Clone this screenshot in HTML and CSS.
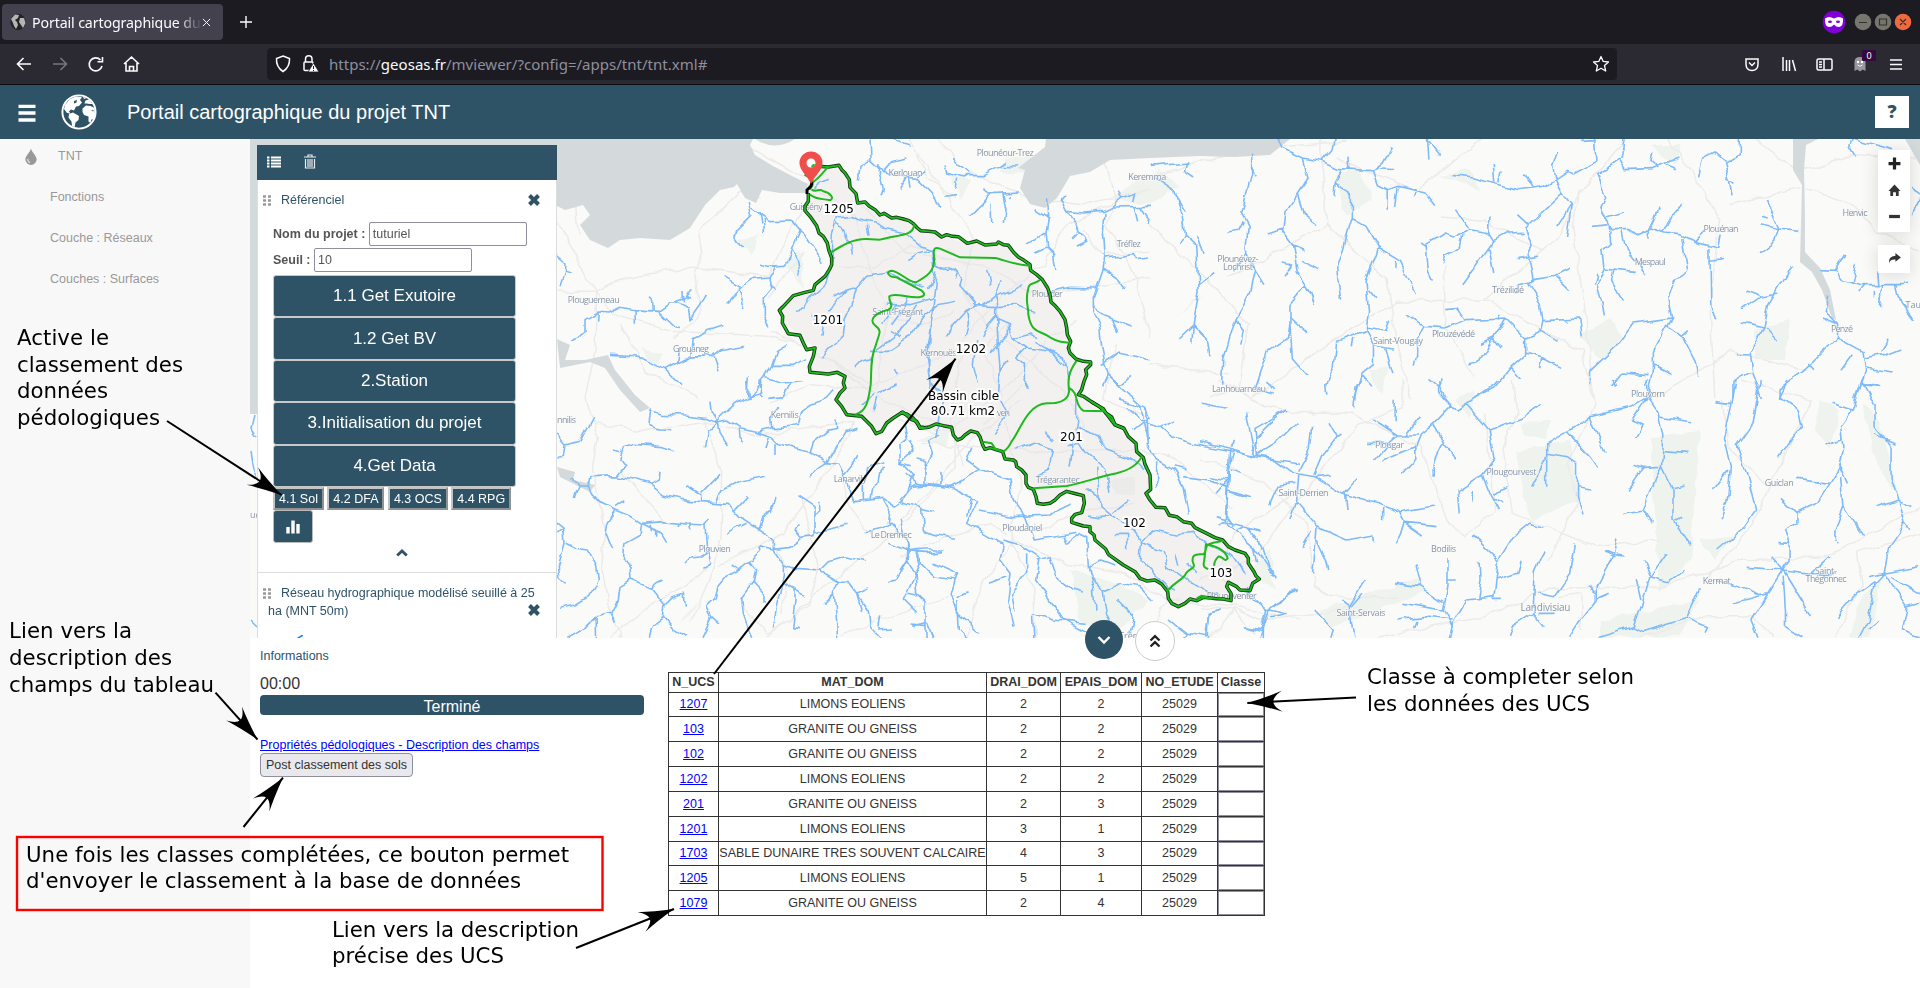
FILE: index.html
```html
<!DOCTYPE html>
<html lang="fr">
<head>
<meta charset="utf-8">
<title>Portail cartographique du projet TNT</title>
<link rel="stylesheet" href="styles.css">
</head>
<body>
<div class="screen">
  <div class="tabs">
    <div class="tab">
      <svg class="favicon" viewBox="0 0 16 18"><ellipse cx="8" cy="9" rx="7.6" ry="8.2" fill="#242424"/><path d="M1 6 5 1.500 9 2 8 5 5 7 7 9 8 12 6 16 4 13 3 10ZM10 5 14 5 15.500 10 13 15 11 12 9 9Z" fill="#b5b5b5"/></svg>
      <span class="tab-title">Portail cartographique du</span>
      <svg class="tab-close" viewBox="0 0 10 10"><path d="M1 1 9 9M9 1 1 9" stroke="#fbfbfe" stroke-width="1.100"/></svg>
    </div>
    <svg class="newtab" viewBox="0 0 12 12"><path d="M6 0V12M0 6H12" stroke="#fbfbfe" stroke-width="1.400"/></svg>
    <svg class="winctl" viewBox="0 0 92 26">
      <circle cx="12" cy="13" r="11.300" fill="#8000d7"/>
      <path d="M3 9.500Q7 6.500 12 9.500 17 6.500 21 9.500 21.500 17.500 17 18 14 18 12 15.500 10 18 7 18 2.500 17.500 3 9.500Z" fill="#fff"/><ellipse cx="8" cy="12.800" rx="2" ry="1.300" fill="#8000d7"/><ellipse cx="16" cy="12.800" rx="2" ry="1.300" fill="#8000d7"/>
      <circle cx="41" cy="13" r="8.300" fill="#77766e"/><circle cx="61" cy="13" r="8.300" fill="#77766e"/><circle cx="81" cy="13" r="8.300" fill="#ee6940"/>
      <path d="M37 13.500H45M57.500 10H64.500V16H57.500ZM78 10 84 16M84 10 78 16" stroke="#33322e" stroke-width="1.200" fill="none"/>
    </svg>
  </div>
  <div class="toolbar">
    <svg class="nav" viewBox="0 0 140 24" fill="none" stroke="#fbfbfe" stroke-width="1.600">
      <path d="M15 12H2M7.500 6 1.500 12 7.500 18"/><path d="M37 12H50M44.500 6 50.500 12 44.500 18" stroke="#77767f"/>
      <path d="M84.500 8A6.500 6.500 0 1 0 86 14M86.500 5V9.800H81.500"/>
      <path d="M108 12 115.500 5 123 12M110 11V19H121V11M113.500 19V14.500H117.500V19"/>
    </svg>
    <div class="urlbar">
      <svg class="shield" viewBox="0 0 44 20" fill="none" stroke="#fbfbfe" stroke-width="1.500"><path d="M8 2 14.500 4.500Q15 13 8 17.500 1 13 1.500 4.500Z"/><rect x="29" y="8" width="9" height="8.500" rx="1"/><path d="M30.500 8V5A3.200 3.200 0 0 1 37 5V8"/><path d="M38.500 9 44 18H33Z" fill="#fbfbfe" stroke="#1c1b22" stroke-width=".8"/><path d="M38.500 12V15M38.500 16V17" stroke="#1c1b22" stroke-width="1"/></svg>
      <span class="url">https://<b>geosas.fr</b>/mviewer/?config=/apps/tnt/tnt.xml#</span>
      <svg class="star" viewBox="0 0 18 18"><path d="M9 1.500 11.200 6.400 16.500 7 12.500 10.600 13.700 16 9 13.300 4.300 16 5.500 10.600 1.500 7 6.800 6.400Z" fill="none" stroke="#fbfbfe" stroke-width="1.300" stroke-linejoin="round"/></svg>
    </div>
    <svg class="tools" viewBox="0 0 170 32" fill="none" stroke="#fbfbfe" stroke-width="1.500">
      <path d="M6 11H18V16Q18 22.500 12 22.500 6 22.500 6 16ZM9 14.500 12 17.500 15 14.500"/>
      <path d="M43 9V23M46.500 12V23M49.500 12V23M52.500 12 55.500 23"/>
      <rect x="77" y="11" width="15" height="11" rx="1.500"/><path d="M84 11V22M79 14H82M79 16.500H82M79 19H82"/>
      <path d="M114.500 23V14Q114.500 9 120 9 125.500 9 125.500 14V23L122.700 21.500 120 23.500 117.300 21.500Z" fill="#98979d" stroke="none"/><circle cx="118" cy="14" r="1.200" fill="#fff" stroke="none"/><circle cx="122" cy="14" r="1.200" fill="#fff" stroke="none"/><path d="M117.500 17Q120 19.500 122.500 17" stroke="#eee" stroke-width="1"/>
      <rect x="122" y="2" width="14" height="11" rx="1" fill="#33093f" stroke="none"/><text x="126.500" y="11" class="badge">0</text>
      <path d="M150 12H162M150 16.500H162M150 21H162"/>
    </svg>
  </div>
  <header class="header">
    <svg class="burger" viewBox="0 0 18 18"><path d="M.5 2.300H17.500M.5 9H17.500M.5 16H17.500" stroke="#fff" stroke-width="3.300"/></svg>
    <svg class="globe" viewBox="0 0 36 36"><circle cx="18" cy="18" r="16.600" fill="#2e5367" stroke="#fff" stroke-width="1.900"/><path d="M4 11 9 5 15 2.500 21 3 19 6 21 8.500 18 12 15 12.500 13 16.500 10 15.500 8 17.500 9.500 19.500 6 19 3 15ZM8 20 12 18.500 18 22 17.500 26 14.500 28.500 13.500 33.500 11 32 10.500 27.500 7.500 23.500ZM21.500 14.500 25 11.500 29.500 12 33.500 14 34 20 33 25 30.500 25.500 29.500 29 27.500 27.500 27.500 22.500 23 21 21.500 18ZM23.500 9.500 24.500 6.500 28 5.500 31.500 10 28 10 26 9.500ZM22 3 25.500 4 23 5Z" fill="#fff"/><path d="M13 7 16 6 15.500 8.500 13 9.500ZM30 16 32 17.500 33 16.500" fill="#2e5367"/></svg>
    <h1>Portail cartographique du projet TNT</h1>
    <div class="help">?</div>
  </header>
  <div class="body">
    <aside class="side">
      <div class="side-top"><svg viewBox="0 0 12 18"><path d="M6 .5C7 5 12 8 12 12A6 6 0 0 1 0 12C0 8 5 5 6 .5Z" fill="#999"/><path d="M2.300 11.500Q2.500 14.500 5 15.500" stroke="#ddd" fill="none" stroke-width="1.400"/></svg>TNT</div>
      <div>Fonctions</div><div>Couche : Réseaux</div><div>Couches : Surfaces</div>
    </aside>
    <main class="main">
      <section class="map">
        <svg class="carto" viewBox="250 139 1670 499">
          <defs>
            <filter id="meander" filterUnits="userSpaceOnUse" x="250" y="139" width="1670" height="499" color-interpolation-filters="sRGB"><feTurbulence type="fractalNoise" baseFrequency=".07" numOctaves="1" seed="4"/><feDisplacementMap in="SourceGraphic" scale="9" xChannelSelector="R" yChannelSelector="G"/></filter>
          </defs>
          <rect x="250" y="139" width="1670" height="499" fill="#fafaf8"/>
          <g filter="url(#meander)">
          <g class="wood">
            <path d="M1130 185 1160 170 1180 185 1150 205 1110 200ZM1335 175 1360 170 1372 200 1345 215ZM1580 335 1610 320 1625 340 1600 360ZM1320 610 1420 578 1425 592 1330 628ZM1520 425 1550 420 1545 440 1525 435ZM1515 450 1570 440 1580 500 1530 520ZM1650 440 1700 430 1690 560 1660 590ZM1755 330 1790 320 1785 360 1755 360ZM1600 620 1700 600 1680 635 1600 638ZM1860 400 1880 470 1900 500 1880 420ZM1070 570 1110 580 1150 600 1110 638 1080 620ZM1110 480 1135 478 1135 495 1115 495ZM735 240 760 235 750 255ZM640 347 665 355 655 368ZM1005 158 1035 155 1030 175 1000 172ZM1270 550 1275 590 1250 570ZM1820 400 1840 410 1830 450 1815 430ZM1440 175 1470 170 1480 190ZM950 175 970 180 960 200Z"/>
            <path d="M1650 145 1680 145 1675 165ZM1370 370 1390 365 1380 395ZM1700 540 1735 535 1715 560ZM1860 600 1880 580 1870 638 1850 638ZM680 620 700 600 690 615ZM785 265 800 250 805 290ZM1175 318 1205 295 1195 300ZM1455 400 1475 390 1470 420ZM915 440 950 425 945 445Z"/>
          </g>
          <g class="road" transform="translate(555 138) scale(.33333)">
            <path d="M0 240 40 310 75 390 125 460 120 640 90 780M125 460Q220 400 430 390L640 415 680 330 770 170M125 460 175 530 350 580 640 595 760 630 940 735M0 460 125 460M560 0 640 60 760 130 900 230 940 380 1000 520 960 760M620 180 560 160 430 280 440 340 420 400 440 520 360 600M750 340 700 400 640 480M200 560 270 700 430 780M850 380 960 390 1060 320 1200 350M1060 0 1120 120 1200 180M0 100 60 180 70 290M180 0 300 40M640 800 760 740 940 750 1200 640M1000 540 1120 560 1200 520"/>
            <path d="M90 780 130 900 110 1000 150 1170 140 1290 160 1400 200 1500 190 1499M120 858 280 880 450 850 600 890 900 850M440 840 500 1000 495 1200 480 1280 410 1450M495 1280 680 1190 820 1000 900 850M680 1430 700 1300 640 1190M470 1275 400 1340 290 1400 160 1500M640 1500 800 1350 1000 1200 1200 990 1200 850M950 1190 880 1100 860 1000M560 1400 640 1490 760 1400 790 1300 740 1080M200 1000 330 1150M860 1490 1200 1370"/>
          </g>
          <g class="road" transform="translate(750 138) scale(.33333)">
            <path d="M560 0 640 90 840 180 1000 200 1200 150M500 40 560 130 670 300 640 460 720 570 940 760 1000 860 960 930M1200 150 1100 190 950 260 880 380 760 470 640 600 600 860 640 980M1050 30 1100 180 1070 260 1150 400 1200 600M320 180 460 340 700 380 850 470 1000 450 1200 420M620 860 760 760 900 600 980 550M600 870 400 790 230 660 60 580M1100 620 1060 780 1200 840M820 740 700 860M500 860 600 880"/>
            <path d="M1200 340 1060 350 1000 280M770 560 700 640 760 780"/>
          </g>
          <g class="road" transform="translate(900 400) scale(.33333)">
            <path d="M0 360 100 260 200 130 290 60 360 0M320 60 340 170 370 260 330 380 340 440 400 560 410 720M60 130 240 140 420 160 640 150 800 160 900 240 1000 330M0 60 120 100M340 420 500 490 680 520 800 600 1000 620 1200 660M1000 620 960 500 1000 400 1200 270M420 390 560 330 700 310M320 400 270 370 140 410 0 470M920 720 1000 630 1060 700M200 720 240 560 340 430M800 600 740 720"/>
          </g>
          <g class="road" transform="translate(1150 138) scale(.4911 .33333)">
            <path d="M0 120 100 70 240 30 400 10M0 260 100 400 200 560 180 750 120 780M350 0 350 80 360 260 480 420 500 600 530 780M160 420 360 260M210 780 360 620 500 490 680 485 830 300 870 180 970 0M680 485 880 640 900 780M880 150 860 260 890 560 900 700M590 240 680 250 800 340M1050 0 1100 100 1160 240 1140 500 1150 780M1180 200 1330 150 1430 200 1480 280 1568 340M1230 0 1320 100 1440 50 1568 60M600 380 600 560 660 720M380 60 540 160 680 0M0 680 160 710M1030 780 1180 640 1340 700"/>
          </g>
          <g class="road" transform="translate(1200 380) scale(.4592 .33333)">
            <path d="M0 240 60 260 160 330 230 430 250 620 290 650 430 655M240 100 330 100 480 200 540 430 580 470 640 390 620 100M0 680 80 690 130 720 280 700 370 640M680 0 690 100 660 200 680 400 860 500 1000 480M760 540 820 370 800 250 860 80 850 0M1180 0 1330 60 1200 440 1100 600M0 600 120 540 220 350 340 140 440 80 440 0M380 773 620 710 760 625 1000 620 1120 570 1180 540 1360 530 1450 470 1568 385M780 650 830 640 830 750M950 773 1100 710 1200 710 1250 773M1380 773 1440 620 1430 520 1568 460M1230 310 1150 200 1140 60M40 0 140 80 250 105"/>
          </g>
          </g>
          <g class="sea">
            <path d="M250 139H753L750 145 755 155 773 166 792 176 808 184 805 193 780 193 762 190 756 203 745 198 737 184 734 187 720 190 705 205 690 228 670 240 640 238 620 240 608 248 590 240 580 225 590 215 583 205 565 210 557 206V414H250ZM755 139H795Q775 152 755 139ZM1046 139H1290L1270 155 1235 157 1200 156 1150 158 1110 160 1090 172 1070 176 1057 198 1045 208 1030 204 1020 188 1025 170 1018 168 1045 147ZM1793 139H1818L1806 145 1804 170 1805 215 1805 252 1820 268 1830 290 1836 320 1832 318 1822 290 1812 272 1800 262 1802 185 1793 170ZM1905 139H1920V165ZM557 339 570 345 565 360 585 360 608 355 615 370 635 395 650 408 640 412 620 390 605 368 590 362 560 368ZM557 467 575 472 573 480 595 485 590 492 560 477Z"/>
          </g>
          <g class="basinfill">
            <path transform="translate(750 138) scale(.33333)" d="M170 100 205 85 267 83 300 125 323 195 390 230 490 257 512 277 652 316 775 322 840 380 895 452 947 550 962 610 978 663 1022 672 995 768 1012 786 450 824 390 882 355 855 290 830 258 785 285 715 180 703 195 630 150 592 97 555 88 517 130 473 190 457 245 380 240 345 165 218 175 165Z"/>
            <path transform="translate(900 400) scale(.33333)" d="M562 0 645 75 708 132 750 220 752 265 738 280 768 322 808 346 920 400 1035 460 1078 537 1050 572 985 547 993 602 910 590 835 620 812 608 785 550 740 543 625 463 570 380 515 367 545 338 553 290 500 274 450 310 412 310 400 268 378 230 308 155 255 145 235 98 172 120 155 85 60 85 0 38Z"/>
          </g>
          <g filter="url(#meander)">
          <g class="river" transform="translate(555 138) scale(.33333)">
            <path d="M0 350 30 375 28 400 52 405M30 400 15 448M50 608 75 600 90 585 90 545 130 522 165 525 200 508 235 515 310 520 345 495 370 493 400 510 405 540 430 505 452 470M130 522 128 545M237 515 238 560M292 520 290 490 282 482M310 520 360 567 372 568M360 493 410 475M388 493 387 460M395 480 415 448M165 652 220 655 270 662 330 695 378 740M330 695 365 675 410 653 470 655 495 635 572 622M365 675 370 640M410 653 415 605 455 585 460 575 505 560M478 655 492 697M580 195 590 235 545 280 540 300 560 330M590 210 640 245 710 243 735 275 770 320 798 360 797 378M625 240 628 288M612 220 618 260M735 270 710 330 700 370 690 382 640 385 615 378M710 330 725 370 732 410M665 385 645 420 590 425 560 450 525 430 503 418M645 420 650 450 625 480 625 540 642 568M560 450 515 497M550 455 570 508M645 440 665 455"/>
            <path d="M750 665 715 685 650 685 630 720 590 770 580 780M695 622 665 640 650 685M630 718 680 733 740 725M575 775 580 715M620 735 615 770 622 780M945 0 948 65 915 85 910 125M948 65 985 100 1000 85 1010 70 1060 60M975 75 973 110 985 150 978 172M985 100 1050 120 1090 125 1145 180 1158 212M1055 120 1035 155M1060 120 1065 152M1090 120 1110 100M1000 0 1062 18M1165 175 1200 170M820 520 840 490 870 460 905 450 935 415 1000 405 1040 430 1110 450M905 450 890 500 870 545 865 590 805 655M870 460 830 480M800 590 805 560 770 530M720 520 750 515 770 475 810 440 830 380 835 290 850 240 890 235 910 245 960 255 985 270 1050 285 1100 325 1130 335 1140 420 1120 450M845 250 865 280 870 300M940 260 945 290M870 300 890 320 895 350M1130 335 1140 380 1200 400M1130 335 1090 345 1060 365M780 160 790 130 815 118M1140 500 1125 600 1120 700 1130 780M1200 490 1150 500 1110 530 1060 600 1000 640 945 640M1060 480 1040 520 1010 560M1005 580 1035 600M900 690 920 670 950 660"/>
          </g>
          <g class="river" transform="translate(555 380) scale(.33333)">
            <path d="M0 160 30 195 25 232 5 235M30 195 75 183 90 155 113 112M290 85 285 140 310 150 350 152M285 90 320 103 390 105 450 113 490 125 520 120 555 143 610 155 650 170 670 190 710 205 765 217 815 245 850 250 868 285 890 340 900 365 985 355 1020 378 1045 360 1060 320 1110 315 1200 320M468 65 472 95 490 125 495 160 517 195M490 125 470 148 455 150 445 205M490 120 520 90 580 50 620 40 615 5M580 50 575 0M640 55 685 50 710 0M550 145 552 175 563 187M640 170 630 205M663 190 663 228M610 155 650 143 700 140 730 132 740 95 770 75 800 65 835 25M650 143 647 110 672 85M765 217 775 185 820 150 845 145 843 118M815 245 790 260 765 292M815 245 870 155 908 145M868 285 900 245 908 225M890 340 930 300 938 260 985 245M925 360 925 305M945 360 950 330 975 310 985 260"/>
            <path d="M50 300 70 318 60 340 55 357M70 318 100 318 105 290 185 287 240 297 285 313 325 345 375 358 440 365 520 370 555 410 610 447 655 475 655 510 685 555 685 590 665 680 655 745M100 318 110 340 140 370 180 390 230 410 260 430 320 460 335 485M185 287 210 255 195 235 205 200 240 190 320 197 360 210M195 215 180 210M285 313 310 300 312 275M440 365 440 345 395 318M440 340 495 283M485 365 500 330 555 300 610 290 628 285M540 395 577 355M575 430 545 445 517 463M610 447 620 415 650 393 663 357M180 390 155 430 150 460 170 510M180 380 205 362M260 430 320 425 390 432 450 435 460 420M260 430 255 465 210 490 205 535 225 560 228 600 195 620 190 660 170 700 125 710 90 745 40 775M285 435 290 455M305 450 305 470M370 430 365 440M400 430 405 450M450 435 455 520 440 530 410 535 390 555M455 510 465 555 442 568M228 600 290 625 330 675 325 715 290 740 280 770M290 625 300 610 320 600M330 675 350 655 385 643 388 680M325 715 350 745 390 770M170 700 185 727M120 715 122 780"/>
            <path d="M0 425 25 445 30 490 10 560 15 590 35 607M25 445 5 465M35 490 65 505 100 510 125 560 130 605 100 650 60 675 15 685M655 510 612 500M655 505 705 500 740 475 780 470 780 380 730 347M780 460 850 440 875 433M740 475 720 450 730 430M780 410 797 395 797 365M612 500 615 515 580 545 550 570 515 590 490 620 480 655 455 680 470 710 440 772M580 545 605 570 598 605 560 655 565 700 590 770M598 605 630 640 630 668M550 570 530 555M470 710 495 733M685 555 720 565 795 570 850 603 880 605 905 640 940 690 945 740 975 773M795 570 820 545 870 530 935 545M850 603 835 640 845 770M835 645 810 670M905 640 940 623M905 640 920 690M975 750 1005 747M975 745 980 712M685 610 720 630 720 660 710 740 735 743M720 630 750 645M985 360 1005 395 1000 425 1050 475 1060 515 1055 540 1080 580 1085 640 1110 665 1110 770M1005 430 980 445 935 455M1060 515 1000 490M1060 515 1110 510 1165 510M1055 540 1025 600 1000 605M1090 515 1100 550 1140 590 1200 600M1045 365 1100 385 1140 395M1100 385 1105 450 1140 465 1200 475M1060 320 1075 285 1035 240 1035 195 1055 180 1045 135M1035 250 1070 260M1110 315 1110 260 1135 225 1120 180 1155 165M1060 640 1085 645M1070 735 1110 740"/>
          </g>
          <g class="river" transform="translate(750 138) scale(.33333)">
            <path d="M585 85 590 105 640 120 650 110 700 110 745 85 805 87M620 125 615 150M660 105 610 60M745 85 765 70M660 235 700 195 720 170 810 165M720 170 700 155M720 200 722 258M755 165 765 215 760 252M780 175 775 180M890 180 893 240 885 285 890 330 910 350 918 395M885 285 825 320M890 330 855 345M893 240 855 215M930 180 950 220 1000 225 1060 220 1080 210 1200 208M945 170 930 190M950 220 975 255 985 280 1010 310 980 325M985 285 970 300M1065 225 1060 280 1065 350 1058 400 1030 480 1030 530 1050 570 1055 630 1065 680 1075 710 1105 740 1170 800 1195 900M1080 210 1115 180 1105 155M1115 180 1150 165 1145 190M1150 210 1160 250M1170 210 1200 255M1065 360 1150 350 1160 365 1200 360M1060 390 1105 420 1130 450M1040 450 960 448 900 460M1030 510 1060 530 1085 540 1100 585M1085 540 1150 565M1055 680 1105 645 1200 665M1075 710 1058 745M1075 710 1110 740 1140 715M850 610 940 660 955 720"/>
            <path d="M550 345 560 380 590 400 620 395 635 425 630 440 660 475 680 500 740 503 800 500 850 520M680 500 650 515 610 560 590 595M700 500 730 475 800 455 815 440M745 500 735 470 750 430M710 395 720 440M620 400 612 425M740 505 740 545 775 560 790 600 830 630 900 640 950 690M740 530 715 560 695 600M775 560 775 590 720 645M790 600 850 585 860 600M830 630 800 660 820 680 820 720 835 750M740 545 750 700 745 780 770 830 730 890M750 700 775 670M650 515 655 560 645 590M680 600 670 680 685 740M410 495 480 500 550 480 560 400M555 480 545 560 530 650 545 740 580 770 560 900M500 500 460 560 440 590 380 635M380 780 370 820M380 770 440 740M370 770 330 800M440 710 430 690M440 500 395 560"/>
          </g>
          <g class="river" transform="translate(900 400) scale(.33333)">
            <path d="M0 300 35 260 50 250 20 225M50 250 150 262 240 208 330 240 340 300 370 340 400 420 530 400M120 260 120 215M150 262 230 300 200 370 270 410 310 430 300 480 330 520 320 600 340 680M215 290 200 350M240 208 200 180 215 140M75 220 80 180 50 170M0 190 45 150 30 120M240 330 340 350 450 345 470 330 515 308M0 360 20 430 20 480 0 510M20 455 80 460 125 455M50 455 60 490 10 600 50 640M100 490 170 520 150 580 170 640 240 700M170 590 200 575M310 420 360 435 420 475 410 540 450 600 490 660 560 700M380 460 380 520 335 580 345 635M410 480 450 470 470 530 520 570 555 580M270 550 320 530M400 640 460 660 560 670M400 640 405 720M40 680 80 670 100 720M170 600 175 690 205 720M500 430 540 400 560 410 565 500 580 560 585 630M565 500 600 480 640 495M570 520 610 580 620 650 650 700M610 580 660 550 720 560 760 600M650 600 700 650 690 700M500 430 490 410"/>
            <path d="M530 0 530 60 510 200M530 80 590 110 620 150 700 180 730 210M500 140 540 130 560 160 620 210M350 150 400 130 460 150 450 210 415 225M460 120 435 95M590 200 600 320 635 350 690 380M635 345 600 350 565 345M635 340 685 300M650 400 680 400 680 450M690 380 725 425 760 390 830 405 880 400 920 430 1000 470 1035 520M725 425 720 480 800 560 830 570M725 430 790 455 800 500 870 550 950 585M830 460 840 500M860 490 890 520M600 300 560 270M620 210 630 280M660 0 740 25 750 50 700 90M740 25 745 130 770 180 820 210 850 260 860 320 865 340M770 190 770 260M820 200 860 210M680 20 720 60 780 80 820 115 880 130 950 145 1060 165 1140 180 1200 190M780 80 820 60M1000 150 985 210 980 350 1000 380M985 260 930 240 850 230M985 270 1050 290M990 210 1020 220M1060 165 1070 110 1110 70 1160 30M1060 150 1040 40M980 370 1060 440 1100 500 1135 525M1060 440 1070 490M980 360 950 350"/>
            <path d="M810 660 860 700 920 710 930 640 960 630M860 700 840 720M1035 680 1090 690 1110 620 1150 600 1190 565M1090 690 1090 720M1110 650 1160 640"/>
          </g>
          <g class="river" transform="translate(1150 138) scale(.4911 .33333)">
            <path d="M0 85 75 75 70 100 90 120M10 120 50 160 65 230 70 285 95 320 100 460 88 560 60 600M88 560 115 600 120 655M88 560 85 620M70 285 60 320M95 290 108 350M100 440 130 405M55 180 72 220M205 50 205 110 185 220 200 260 195 340 215 400 205 460 175 540 150 660 148 740M205 90 212 115M190 250 180 280 158 285M200 345 170 400M215 400 232 440M175 540 190 580 185 620M260 0 268 30 310 60 350 70 385 92 455 98 465 140 485 155M310 60 320 120 300 165 275 220 270 280 290 320 300 400 318 440 285 500 285 560 280 600 240 640 215 750 250 765M300 165 312 230 340 260M270 270 240 285M290 320 315 335M310 370 340 395M270 375 290 380 275 415M318 440 335 495M285 540 320 585M285 560 290 660 320 710M375 0 370 35 350 70M390 92 375 135 410 170 410 240 380 390 388 485M375 135 372 175M410 240 440 265 465 330 440 430 445 520 440 580 380 610 375 690 358 740 360 767M465 330 510 370 540 465M500 370 498 395M405 95 403 50M455 98 475 75 492 28M470 90 495 92M485 215 485 155 505 145 560 165 578 200M500 210 505 150M540 150 535 175M445 455 462 485M440 570 480 580 488 548M440 580 455 620 495 630M455 620 455 680 430 710 415 780M480 630 495 705M430 710 452 745M415 600 412 625"/>
            <path d="M615 112 660 120 700 137 755 155 800 145 825 125 850 100 860 108 908 70 905 0M700 137 697 75M710 135 715 100M780 150 762 110M825 125 820 85 830 38M880 10 908 8M825 125 840 165 800 220 765 270 778 325 770 350 780 425 770 440 795 500 800 545 795 580 765 600 765 650 735 690 700 750 660 780M840 165 858 200 830 262M858 200 848 300M770 260 748 230M760 283 728 285 700 308 690 285 650 275 620 295 600 285 560 320 565 400 573 425M650 275 622 215M690 285 690 240M635 290 630 330 600 350 595 380M550 315 560 325M700 308 660 390 635 440M690 330 700 405M780 425 825 415 855 393M825 415 853 455M745 365 790 355M780 430 750 440 740 460M800 545 875 540 880 598M840 545 848 553M790 575 830 610M765 645 800 660 835 688M800 660 795 690M735 690 757 725M725 540 765 600M725 540 640 545 600 570 560 565 525 530M640 545 625 512 603 515M560 565 545 605 545 650 540 680M725 540 700 600 670 675 650 680M700 600 715 630M700 600 670 620M710 530 712 545M565 0 568 65M568 10 590 50M565 718 590 750 590 715M590 750 600 780M965 0 960 60 912 110 928 180 918 215 932 250 940 275 975 275 990 290 1020 270 1050 285 1080 290 1115 315 1160 330 1165 290M955 70 965 95 1020 92 1074 60M1035 90 1020 70 1024 45M1050 80 1072 92M932 240 965 225M900 265 932 260M1010 290 1035 212M1045 285 1065 230 1085 195M1010 290 1015 305M935 260 938 315 920 340 925 390 910 440 920 490 925 535M960 275 970 340 1010 410M925 390 985 400M945 390 940 430 962 488M910 410 905 440M1085 300 1095 400 1070 425 1055 480 1062 540 1052 565 1025 640 1025 700 1015 780M1062 540 985 555 950 625 895 700 895 740M1052 565 1085 600 1110 670 1115 713M1080 595 1093 578M1015 710 960 705 940 745M1025 680 1062 707M1140 330 1142 500 1152 550M1110 310 1130 280M1140 370 1165 365M1200 0 1200 50 1170 75 1180 125 1185 175M1117 115 1125 65 1150 45 1170 70M1175 120 1190 130M1255 185 1280 270 1318 277M1280 270 1272 310 1240 347M1260 240 1248 235M1280 272 1245 260M1310 382 1300 400 1260 500 1250 570 1220 640 1225 700 1245 780M1280 465 1245 475 1210 455M1245 475 1205 515M1250 570 1205 555M1255 570 1280 610M1220 650 1195 650M1220 700 1185 730 1185 780M1430 0 1425 25 1437 55M1430 0 1515 35M1380 470 1375 520 1400 560 1400 600 1450 640 1455 700 1435 780M1400 600 1330 700 1283 750 1283 780M1365 398 1395 400 1410 425 1450 440 1530 440 1545 435M1395 400 1415 348M1430 430 1438 380M1460 440 1445 465M1490 440 1485 505M1475 455 1475 475M1520 440 1530 500 1553 545M1400 560 1368 540M1450 660 1495 650 1530 630M1490 640 1505 605M1455 690 1515 702M1430 650 1407 697M1450 740 1485 745M1340 675 1352 695M1480 440 1478 400M1550 150 1568 165M1568 180 1550 230"/>
          </g>
          <g class="river" transform="translate(1200 380) scale(.4592 .33333)">
            <path d="M0 185 65 205 120 230 165 240 205 280 250 290 310 340 390 370 435 395 510 378M65 205 60 300 55 425 100 440 135 500 150 570 165 583M80 180 68 200M125 225 120 145 190 90M125 225 165 190 210 128M245 140 240 210 215 275M283 130 300 170 265 230 248 285M300 170 308 162M215 285 210 370 255 440 250 520 245 580M210 310 170 315 152 370M210 370 198 420M255 440 320 480 378 465 380 490M240 450 220 500M255 480 275 540 280 570M250 290 285 285M310 340 340 293M315 340 318 390M435 395 445 430 425 490M400 380 400 420M445 430 515 440M445 430 485 468M60 300 20 290M60 300 35 340M65 335 100 350M55 425 45 435M80 450 95 440M100 440 130 450M518 0 520 40 545 80 510 130 480 165 470 200 470 235 440 280M540 80 560 90 640 15 650 0M580 70 630 150 640 240 615 285 560 335 565 400M510 130 530 190 510 250 510 290M530 195 555 235M475 165 430 165 380 120M430 165 410 190 360 190M425 130 425 65M410 190 380 240M450 165 480 110M470 200 400 240M630 150 700 115 742 70M615 285 630 340 650 390M595 330 595 365M635 340 670 320M640 355 662 368"/>
            <path d="M975 0 975 50 940 80 850 110 800 155 755 190 755 230 720 320M755 220 755 320M755 220 800 230 820 250 820 350 833 408M820 320 855 328M800 155 850 230 865 260M850 110 880 220M975 50 940 120 965 135 950 170M975 50 1000 100 1010 170 1005 260 965 390 985 430M1000 110 1065 125M1010 215 1060 220M1000 262 965 265 945 255M965 265 930 335M1005 260 1030 330 1030 420 1065 490M1025 325 1055 315M965 390 920 400M1035 420 1052 412M1165 0 1155 80 1140 170 1155 260 1150 350 1135 415M1155 70 1125 65M1150 270 1118 330M1220 0 1205 130 1170 200 1190 280 1210 390 1180 450 1125 513M1280 0 1262 50 1300 90 1310 140 1258 235M1440 0 1420 90 1395 140 1400 200 1390 270 1345 370 1300 400 1300 430 1275 450 1285 490 1285 540 1270 570 1200 720 1215 773M1420 90 1375 70M1400 175 1360 195M1390 250 1410 310M1395 290 1400 380 1380 450 1390 490M1400 380 1445 470M1370 310 1300 298M1300 400 1265 355M1285 490 1255 488M1270 570 1195 562M1270 570 1245 530M1270 570 1310 660 1330 710M1270 590 1275 690 1275 740 1310 773M1270 570 1330 580 1370 530M1330 580 1385 585M1220 645 1130 600M1240 640 1160 670M1440 0 1470 80 1470 140 1505 200 1505 290 1520 350 1535 430 1500 500 1490 580 1470 610 1455 720 1435 773M1470 165 1515 190M1440 10 1475 15M1520 360 1470 385M1520 360 1550 380M1535 430 1545 450M1490 580 1568 560M1490 580 1540 680 1530 750 1568 773M1490 580 1455 590M1470 605 1425 650 1388 710M1505 590 1568 640M1455 750 1480 720M1540 680 1568 670"/>
            <path d="M597 470 650 540 645 600 640 650 580 660 550 730 543 773M650 535 680 470 715 430 748 442M645 600 690 580 697 545M610 550 612 600 605 655M640 655 655 655M540 535 540 620 530 690 550 740M530 665 480 620 425 610M540 600 557 600M480 620 468 550M530 690 485 680 445 670M550 720 485 710 425 720M470 720 465 745M752 510 730 580 725 700 680 740 672 773M815 490 805 580 770 650 735 640M725 700 750 740M735 700 770 700M908 475 900 530 865 620 865 660 830 720 805 773M905 525 925 528M905 530 880 515M865 640 845 620M865 655 890 640M1015 520 980 590 965 660 945 740 865 773M945 740 965 755 1060 715 1105 740 1100 755M1060 715 1090 625M980 590 1020 605 1055 570M980 590 965 545M950 600 960 660M250 690 290 750 285 773M360 600 325 680 335 773M310 660 330 680 355 640M18 773 20 700 45 690M95 740 135 755 145 690 190 650 205 625M150 690 182 700M135 755 130 773M145 690 120 660 100 625M975 0 970 20M335 85 340 20 350 0M145 0 160 30M0 70 60 85M900 0 905 20"/>
          </g>
          <g class="river"><path d="M254 415 251 427 257 436M250 452 253 470 257 480M250 620 257 627"/></g>
          </g>
          <g class="towns">
            <text x="567.700" y="303" textLength="52">Plouguerneau</text><text x="673" y="352" textLength="36">Grouaneg</text><text x="789.700" y="210" textLength="33">Guissény</text><text x="888.500" y="176" textLength="34">Kerlouan</text><text x="976.700" y="156" textLength="57">Plounéour-Trez</text><text x="1128.300" y="180" textLength="38">Keremma</text><text x="1116.700" y="247" textLength="24">Tréflez</text><text x="1031.700" y="297" textLength="31">Plouider</text><text x="872.300" y="314.500" textLength="51">Saint-Frégant</text><text x="920.500" y="355.500" textLength="36">Kernouës</text><text x="997" y="416" textLength="13">ven</text><text x="770.700" y="417.500" textLength="28">Kernilis</text><text x="557" y="423" textLength="19">nnilis</text><text x="833.700" y="482" textLength="33">Lanarvily</text><text x="870.700" y="538" textLength="41">Le Drennec</text><text x="698.700" y="551.500" textLength="32">Plouvien</text><text x="1035.700" y="483" textLength="44">Trégarantec</text><text x="1002.300" y="531" textLength="40">Ploudaniel</text><text x="1206.700" y="599" textLength="50">Plounéventer</text><text x="1217.300" y="261.500" textLength="41">Plounévez-</text><text x="1223" y="269.500" textLength="30">Lochrist</text><text x="1492" y="293" textLength="32">Trézilidé</text><text x="1432" y="337" textLength="43">Plouzévédé</text><text x="1373" y="343.500" textLength="50">Saint-Vougay</text><text x="1212" y="391.500" textLength="54">Lanhouarneau</text><text x="1703.500" y="232" textLength="35">Plouénan</text><text x="1634.700" y="265" textLength="31">Mespaul</text><text x="1842.500" y="216" textLength="25">Henvic</text><text x="1831" y="332" textLength="22">Penzé</text><text x="1905.500" y="308">Taulé</text><text x="1631" y="396.500" textLength="34">Plouvorn</text><text x="1375" y="448" textLength="29">Plougar</text><text x="1486.500" y="474.500" textLength="50">Plougourvest</text><text x="1764.700" y="486" textLength="29">Guiclan</text><text x="1278.500" y="496" textLength="50">Saint-Derrien</text><text x="1431" y="552" textLength="25">Bodilis</text><text x="1702.800" y="584" textLength="28">Kermat</text><text x="1814.800" y="573.500" textLength="22">Saint-</text><text x="1805.600" y="582" textLength="41">Thégonnec</text><text x="1336.400" y="616" textLength="49">Saint-Servais</text><text x="1520.500" y="611" class="big" textLength="50">Landivisiau</text><text x="1119" y="638.500">Trém</text><text x="250" y="518">ud</text>
          </g>
          <g class="casing">
          <g id="outline">
            <g transform="translate(750 138) scale(.33333)"><path d="M168 115 175 95 205 85 235 87 267 82 275 95 285 105 298 125 300 148 318 167 323 195 345 192 358 205 375 215 390 231 402 226 425 240 440 238 460 243 477 248 490 257 502 270 512 278 535 280 555 282 575 297 590 290 607 295 625 296 652 316 680 309 705 321 740 318 745 312 760 320 775 322 785 335 790 342 805 357 822 367 840 380 842 397 860 410 877 425 893 450 900 470 903 492 917 505 930 520 945 545 950 570 952 590 962 610 955 630 960 645 978 663 1000 670 1022 672 1022 680 1007 695 1010 710 1002 730 995 755 985 770 1000 775 1030 795 1060 812 1067 825 1085 837 1095 860 1120 870 1122 874"/><path d="M522 868 510 868 500 850 485 845 458 822 430 840 410 855 395 880 378 887 365 865 350 850 335 835 290 830 275 805 258 785 270 765 285 750 280 735 285 715 262 703 235 708 180 703 178 685 190 655 195 630 170 635 160 615 150 592 115 587 97 555 98 535 88 517 100 505 130 473 165 463 190 457 195 440 225 415 238 395 245 380 245 360 236 335 232 315 220 295 207 285 200 263 180 235 165 218 165 205 175 190 175 165"/></g>
            <g transform="translate(900 400) scale(.33333)"><path d="M575 5 595 18 612 32 630 55 645 75 672 86 685 110 708 130 710 155 730 173 735 193 750 225 752 268 738 280 750 300 768 322 795 323 808 346 830 350 850 365 875 370 885 383 920 400 945 413 968 420 985 440 1005 450 1035 460 1045 475 1045 490 1062 515 1068 528 1078 537 1058 550 1050 572 1020 570 1010 560 985 547 980 560 993 580 993 602 970 597 950 596 910 592 890 602 870 597 855 610 835 620 815 610 805 595 803 575 785 552 765 540 740 543 720 535 705 515 670 495 625 463 617 447 585 420 582 405 570 395 570 380 550 378 515 367 515 355 525 343 545 338 553 310 550 287 530 282 500 274 480 285 465 300 450 310 430 313 412 310 408 290 400 268 385 262 378 250 378 225 365 210 350 200 347 185 340 180 315 177 308 155 285 148 270 143 255 148 248 135 240 110 232 98 212 93 195 105 185 115 172 120 160 105 155 82 130 77 108 72 85 82 60 85 52 70 40 55 20 42 0 38"/></g>
          </g>
          </g>
          <use class="core" href="#outline"/>
          <g class="zones" transform="translate(750 138) scale(.33333)">
            <path d="M240 345C280 320 310 302 350 303L390 305C440 290 490 295 492 262M840 383C790 380 760 365 735 360L630 358 570 332C550 325 550 335 552 360C555 400 530 415 500 432C480 438 450 400 425 398C405 400 415 418 440 418L515 458C530 470 520 478 500 478C460 475 430 465 418 475C415 490 435 505 415 515C375 525 355 545 375 562C400 580 385 590 378 620C360 660 365 700 362 740C355 790 350 820 315 830M870 425C860 440 835 430 834 455C825 490 835 500 835 530C845 590 870 575 900 598C930 615 940 612 962 614M980 668C950 710 955 730 957 760C955 790 920 797 890 796C830 800 810 880 785 910C775 930 770 935 760 941M957 750C990 765 970 800 1000 818L1065 820M185 135C210 120 220 100 235 87M185 155C200 165 210 148 220 160C240 165 255 180 240 187C215 180 205 188 180 170M180 155 188 140 186 110"/>
            <path transform="translate(450 786)" d="M400 265 500 258C560 245 600 230 650 220C690 210 715 190 725 170M803 572C830 540 850 540 858 520C870 500 890 510 878 485C875 460 890 465 912 462C925 440 910 435 940 428L970 422M918 430C915 460 915 470 912 485C908 500 915 505 925 507M925 435C960 440 980 460 983 475C975 490 965 465 955 470C945 480 942 490 943 498M248 125 275 130 285 145 308 155M890 595 905 587 935 597"/>
          </g>
          <path d="M812 182 811 186 807 190 807 194" stroke="#000" stroke-width="3" fill="none"/>
          <path d="M811 184C808 176 799.500 171 799.500 163A11.500 11.500 0 0 1 822.500 163C822.500 171 814 176 811 184Z" fill="#ef4e4b"/><circle cx="811" cy="163" r="4.500" fill="#fff"/><path d="M811 167Q812 163 815.500 164.500L813 167.500Z" fill="#1fb81f"/>
          <g class="labels">
            <text x="838.700" y="213">1205</text><text x="828" y="324">1201</text><text x="971" y="353">1202</text><text x="963.500" y="400">Bassin cible</text><text x="963" y="415">80.71 km2</text><text x="1071.500" y="441">201</text><text x="1134.500" y="527">102</text><text x="1221" y="577">103</text>
          </g>
        </svg>
        <div class="layers">
          <div class="layers-bar">
            <svg viewBox="0 0 14 12" width="14" height="12"><path d="M0 1.500H2.500M4 1.500H14M0 4.500H2.500M4 4.500H14M0 7.500H2.500M4 7.500H14M0 10.500H2.500M4 10.500H14" stroke="#fff" stroke-width="2"/></svg>
            <svg viewBox="0 0 12 15" width="12" height="15" fill="none" stroke="#e8edf0"><path d="M0 3H12M4 3V1H8V3M1.500 5V14H10.500V5M4 5V13M6 5V13M8 5V13" stroke-width="1.200"/></svg>
          </div>
          <div class="layer">
            <div class="layer-head"><svg class="grip" viewBox="0 0 8 11"><path d="M0 1.500H3M5 1.500H8M0 5.500H3M5 5.500H8M0 9.500H3M5 9.500H8" stroke="#999" stroke-width="2.600"/></svg><span>Référenciel</span><svg class="cross" viewBox="0 0 12 12"><path d="M1.500 1.500 10.500 10.500M10.500 1.500 1.500 10.500" stroke="#2e5367" stroke-width="4"/></svg></div>
            <div class="form">
              <label>Nom du projet : <span class="input">tuturiel</span></label>
              <label>Seuil : <span class="input">10</span></label>
              <button class="big-btn">1.1 Get Exutoire</button><button class="big-btn">1.2 Get BV</button><button class="big-btn">2.Station</button><button class="big-btn">3.Initialisation du projet</button><button class="big-btn">4.Get Data</button>
              <div class="small-row"><button>4.1 Sol</button><button>4.2 DFA</button><button>4.3 OCS</button><button>4.4 RPG</button></div>
              <button class="chart-btn"><svg viewBox="0 0 14 14" width="14" height="14"><path d="M2 7V13.500M7 .5V13.500M12 4V13.500" stroke="#fff" stroke-width="3.400"/></svg></button>
            </div>
            <svg class="chev" viewBox="0 0 12 8"><path d="M1.200 6.500 6 2 10.800 6.500" fill="none" stroke="#2e5367" stroke-width="2.800"/></svg>
          </div>
          <div class="layer second">
            <svg class="grip" viewBox="0 0 8 11"><path d="M0 1.500H3M5 1.500H8M0 5.500H3M5 5.500H8M0 9.500H3M5 9.500H8" stroke="#999" stroke-width="2.600"/></svg>
            <div class="long"><span class="indent"></span>Réseau hydrographique modélisé seuillé à 25<br>ha (MNT 50m)</div>
            <svg class="cross" viewBox="0 0 12 12"><path d="M1.500 1.500 10.500 10.500M10.500 1.500 1.500 10.500" stroke="#2e5367" stroke-width="4"/></svg>
            <svg class="legend" viewBox="0 0 8 5"><path d="M0 5 8 0" stroke="#0a84ff" stroke-width="1.600"/></svg>
          </div>
        </div>
        <div class="controls">
          <div class="zoom">
            <svg viewBox="0 0 12 12"><path d="M6 .5V11.500M.5 6H11.500" stroke="#222" stroke-width="3"/></svg>
            <svg viewBox="0 0 14 14"><path d="M7 .5 13.500 7.500H11.500V13H8.500V9H5.500V13H2.500V7.500H.5Z" fill="#333"/></svg>
            <svg viewBox="0 0 12 12"><path d="M1 6H11" stroke="#333" stroke-width="3"/></svg>
          </div>
          <div class="share"><svg viewBox="0 0 14 12"><path d="M8 0 14 5 8 9.500V7Q2 6.500 1 11.500 0 3.500 8 3Z" fill="#333"/></svg></div>
        </div>
        <div class="round dark"><svg viewBox="0 0 14 10"><path d="M1.500 2 7 7.500 12.500 2" fill="none" stroke="#fff" stroke-width="2.400"/></svg></div>
        <div class="round light"><svg viewBox="0 0 12 14"><path d="M1.500 6.500 6 2.200 10.500 6.500M1.500 12.500 6 8.200 10.500 12.500" fill="none" stroke="#222" stroke-width="2.300"/></svg></div>
      </section>
      <section class="results">
        <div class="info">
          <div class="info-title">Informations</div>
          <div class="timer">00:00</div>
          <div class="progress">Terminé</div>
          <a>Propriétés pédologiques - Description des champs</a>
          <button class="post">Post classement des sols</button>
        </div>
        <table>
          <colgroup><col class="c1"><col class="c2"><col class="c3"><col class="c4"><col class="c5"><col class="c6"></colgroup>
          <tr><th>N_UCS</th><th>MAT_DOM</th><th>DRAI_DOM</th><th>EPAIS_DOM</th><th>NO_ETUDE</th><th>Classe</th></tr>
          <tr><td><a>1207</a></td><td>LIMONS EOLIENS</td><td>2</td><td>2</td><td>25029</td><td class="in"></td></tr>
          <tr><td><a>103</a></td><td>GRANITE OU GNEISS</td><td>2</td><td>2</td><td>25029</td><td class="in"></td></tr>
          <tr><td><a>102</a></td><td>GRANITE OU GNEISS</td><td>2</td><td>2</td><td>25029</td><td class="in"></td></tr>
          <tr><td><a>1202</a></td><td>LIMONS EOLIENS</td><td>2</td><td>2</td><td>25029</td><td class="in"></td></tr>
          <tr><td><a>201</a></td><td>GRANITE OU GNEISS</td><td>2</td><td>3</td><td>25029</td><td class="in"></td></tr>
          <tr><td><a>1201</a></td><td>LIMONS EOLIENS</td><td>3</td><td>1</td><td>25029</td><td class="in"></td></tr>
          <tr><td><a>1703</a></td><td>SABLE DUNAIRE TRES SOUVENT CALCAIRE</td><td>4</td><td>3</td><td>25029</td><td class="in"></td></tr>
          <tr><td><a>1205</a></td><td>LIMONS EOLIENS</td><td>5</td><td>1</td><td>25029</td><td class="in"></td></tr>
          <tr><td><a>1079</a></td><td>GRANITE OU GNEISS</td><td>2</td><td>4</td><td>25029</td><td class="in"></td></tr>
        </table>
      </section>
    </main>
  </div>
  <svg class="notes" viewBox="0 0 1920 988">
    <defs><marker id="head" markerUnits="userSpaceOnUse" markerWidth="40" markerHeight="24" refX="35" refY="12" orient="auto" overflow="visible"><path d="M35 12Q15 7 0 1.500 9 7 9 12 9 17 0 22.500 15 17 35 12Z"/></marker></defs>
    <g class="arrows">
      <path d="M167 421 281.600 495"/><path d="M215.500 692.700 257.500 739.500"/><path d="M243.500 827 283 777.700"/><path d="M576 948 674 909"/><path d="M714 674 955.600 358.700"/><path d="M1356 697.500 1247.300 703"/>
    </g>
    <rect x="17" y="837" width="585.500" height="73" fill="none" stroke="#f00" stroke-width="2.400"/>
    <g class="notetext">
      <text x="17" y="345" textLength="92">Active le</text><text x="17" y="371.500" textLength="166">classement des</text><text x="17" y="398" textLength="91">données</text><text x="17" y="424.500" textLength="143">pédologiques</text>
      <text x="9" y="638" textLength="123">Lien vers la</text><text x="9" y="665" textLength="163">description des</text><text x="9" y="691.500" textLength="205">champs du tableau</text>
      <text x="26" y="862" textLength="543">Une fois les classes complétées, ce bouton permet</text><text x="26" y="888" textLength="495">d'envoyer le classement à la base de données</text>
      <text x="332" y="937" textLength="247">Lien vers la description</text><text x="332" y="963" textLength="172">précise des UCS</text>
      <text x="1367" y="684" textLength="267">Classe à completer selon</text><text x="1367" y="711" textLength="223">les données des UCS</text>
    </g>
  </svg>
</div>
</body>
</html>
```
FILE: styles.css
```css
*{box-sizing:border-box}
body{margin:0;font-family:"Liberation Sans",Arial,sans-serif;font-size:12.5px;color:#333;background:#fff}
svg{display:block;flex:none}
button{font-family:inherit;margin:0;padding:0}
.screen{position:relative;width:1920px;height:988px;display:flex;flex-direction:column;overflow:hidden}
.tabs{height:44px;background:#1c1b22;display:flex;align-items:center;padding-left:2px}
.tab{width:221px;height:36px;border-radius:4px;background:#42414d;display:flex;align-items:center;padding-left:8px;color:#fbfbfe;font:14.2px "Noto Sans",sans-serif}
.favicon{width:16px;height:18px}
.tab-title{width:168px;margin-left:6px;white-space:nowrap;overflow:hidden;letter-spacing:-.12px;-webkit-mask-image:linear-gradient(90deg,#000 145px,transparent 170px)}
.tab-close{width:9px;height:9px;margin-left:2px}
.newtab{width:12px;height:12px;margin-left:17px}
.winctl{width:92px;height:26px;margin-left:auto;margin-right:6px}
.toolbar{height:41px;background:#2b2a33;border-bottom:1px solid #0c0c0d;display:flex;align-items:center}
.nav{width:140px;height:24px;margin-left:16px}
.urlbar{margin-left:111px;width:1350px;height:32px;border-radius:4px;background:#1c1b22;display:flex;align-items:center;font:15px "Noto Sans",sans-serif;color:#8f8f9d}
.urlbar b{font-weight:400;color:#fbfbfe}
.shield{width:44px;height:20px;margin-left:8px}
.url{margin-left:10px;white-space:nowrap;letter-spacing:.02px}
.star{width:18px;height:18px;margin-left:auto;margin-right:7px}
.tools{width:170px;height:32px;margin-left:auto;margin-right:10px}
.badge{font:9px "Noto Sans",sans-serif;fill:#fff;stroke:none}
.header{height:54px;background:#2e5367;display:flex;align-items:center;padding:0 11px 0 18px;color:#fff}
.burger{width:18px;height:18px;position:relative;top:1px}
.globe{width:36px;height:36px;margin-left:25px}
.header h1{margin:0 0 0 30px;font-size:20px;font-weight:400;line-height:24px}
.help{margin-left:auto;width:34px;height:32px;background:#fff;color:#2e5367;font:800 18px/31px "Open Sans",sans-serif;text-align:center}
.body{flex:1;display:flex;min-height:0}
.side{width:250px;background:#f8f8f8;color:#999;padding-top:9px;display:flex;flex-direction:column;gap:25px;line-height:16px}
.side>div{padding-left:50px}
.side .side-top{padding-left:25px;display:flex;height:16px}
.side-top svg{width:12px;height:17px;margin-right:21px}
.main{width:1670px;display:flex;flex-direction:column}
.map{height:499px;position:relative}
.carto{position:absolute;inset:0;width:1670px;height:499px;overflow:hidden}
.wood path{fill:#eff3ee}
.road path{fill:none;stroke:#ecebea;stroke-width:1.5;vector-effect:non-scaling-stroke}
.sea path{fill:#d4dadc}
.basinfill path{fill:#e6dfe3;opacity:.35}
.river path{fill:none;stroke:#7fbbf8;stroke-width:1.6;vector-effect:non-scaling-stroke;stroke-linejoin:round}
.towns text{font:500 9px "Open Sans",sans-serif;fill:#8796aa;paint-order:stroke;stroke:#fafaf8;stroke-width:1px}
.towns .big{font-size:10px}
.casing path,.core path{fill:none}
.casing,.core{fill:none;stroke-linejoin:round}
.casing{stroke:#123312;stroke-width:10.5}
.core{stroke:#1fb81f;stroke-width:5.4}
.zones path{fill:none;stroke:#1fb81f;stroke-width:6;stroke-linejoin:round}
.labels text{font:12px "DejaVu Sans",sans-serif;fill:#000;text-anchor:middle;paint-order:stroke;stroke:#fff;stroke-width:4px;stroke-opacity:.8}
.layers{position:absolute;left:7px;top:6px;width:300px;height:493px;background:#fff;overflow:hidden}
.layers-bar{height:35px;background:#2e5367;display:flex;align-items:center;gap:23px;padding-left:10px;padding-bottom:2px}
.layer{height:393px;padding-top:12px;border:1px solid #ddd;border-top:0;color:#2e5367;display:flex;flex-direction:column}
.layer-head{display:flex;align-items:center;height:16px;padding-left:5px}
.grip{width:8px;height:11px}
.layer-head span{margin-left:10px}
.cross{width:12px;height:12px}
.layer-head .cross{margin-left:auto;margin-right:16px}
.form{margin:13px 0 0 15px;width:260px;display:flex;flex-direction:column;align-items:flex-start}
.form label{font-weight:700;color:#555;display:flex;align-items:center;height:26px;white-space:pre}
.input{width:158px;height:24px;border:1px solid #8f8f9d;border-radius:2px;font-weight:400;padding-left:3px;line-height:22px}
.big-btn{width:243px;height:42.4px;background:#2e5367;border:1px solid #c8c8c8;border-radius:3px;color:#fff;font-size:17px;line-height:38px}
.form label+.big-btn{margin-top:2px}
.small-row{display:flex;gap:3.4px;height:23px;margin-top:.5px}
.small-row button{height:23px;background:#2e5367;color:#fff;font-size:12.5px;border:2px solid;border-color:#c4c4c4 #929292 #929292 #c4c4c4;padding:0 4px;white-space:nowrap}
.chart-btn{width:40px;height:33px;background:#2e5367;border:1px solid #bbb;border-radius:3px;display:flex;align-items:center;justify-content:center}
.chev{width:12px;height:8px;margin:6px 0 0 138px}
.second{display:grid;grid-template-columns:9px minmax(0,1fr) 30px;padding:14px 0 0 5px;border-bottom:0;height:80px;grid-template-rows:48px 5px}
.second .long{line-height:18px;white-space:nowrap;margin-left:-4px;margin-top:-3px}
.second .grip{margin-top:1px}
.indent{display:inline-block;width:13px}
.second .cross{margin:17px 0 0 2px}
.legend{width:8px;height:5px;grid-column:2;margin-left:23px}
.controls{position:absolute;right:10px;top:11px;width:32px;display:flex;flex-direction:column;gap:13px}
.zoom,.share{background:#fff;box-shadow:0 2px 18px rgba(0,0,0,.14)}
.zoom{height:82px;display:flex;flex-direction:column;align-items:center;justify-content:space-between;padding:7px 0 9px}
.zoom svg{width:13px;height:13px}
.share{height:28px;display:flex;align-items:center;justify-content:center;padding-bottom:2px}
.share svg{width:13px;height:11px}
.round{position:absolute;border-radius:50%;display:flex;align-items:center;justify-content:center}
.dark{left:835px;top:481px;width:38px;height:39px;background:#2e5367}
.dark svg{width:14px;height:10px}
.light{left:885px;top:482px;width:40px;height:40px;background:#fff;border:1px solid #ccc}
.light svg{width:12px;height:14px}
.results{flex:1;display:flex;align-items:flex-start;padding-left:10px}
.info{width:384px;padding-top:10px;display:flex;flex-direction:column;align-items:flex-start}
.info-title{color:#2e5367;line-height:16px}
.timer{font-size:16px;line-height:20px;margin-top:10px}
.progress{width:384px;height:20px;margin-top:1px;border-radius:4px;background:#2e5367;color:#fff;font-size:16px;line-height:23px;text-align:center}
.info a{margin-top:22px;line-height:16px;white-space:nowrap}
a{color:#00f;text-decoration:underline}
.post{width:153px;height:24px;border:1px solid #8f8f9d;border-radius:4px;background:#e9e9ed;color:#333;font-size:12.5px;white-space:nowrap}
table{margin:34px 0 0 24px;border-collapse:collapse;table-layout:fixed;width:597px;text-align:center}
.c1{width:50px}.c2{width:268px}.c3{width:74px}.c4{width:81px}.c5{width:76px}.c6{width:47px}
td,th{border:1px solid #333;padding:1px 0 0;height:24.85px;white-space:nowrap;line-height:15px}
th{height:19.5px}
td.in{box-shadow:inset 0 0 0 1px #8f8f9d}
.notes{position:absolute;left:0;top:0;width:1920px;height:988px;pointer-events:none}
.arrows path{stroke:#000;stroke-width:2;fill:none;marker-end:url(#head)}
#head path{fill:#000;stroke:none;marker:none}
.notetext text{font:21.3px "DejaVu Sans",sans-serif;fill:#000}
```
